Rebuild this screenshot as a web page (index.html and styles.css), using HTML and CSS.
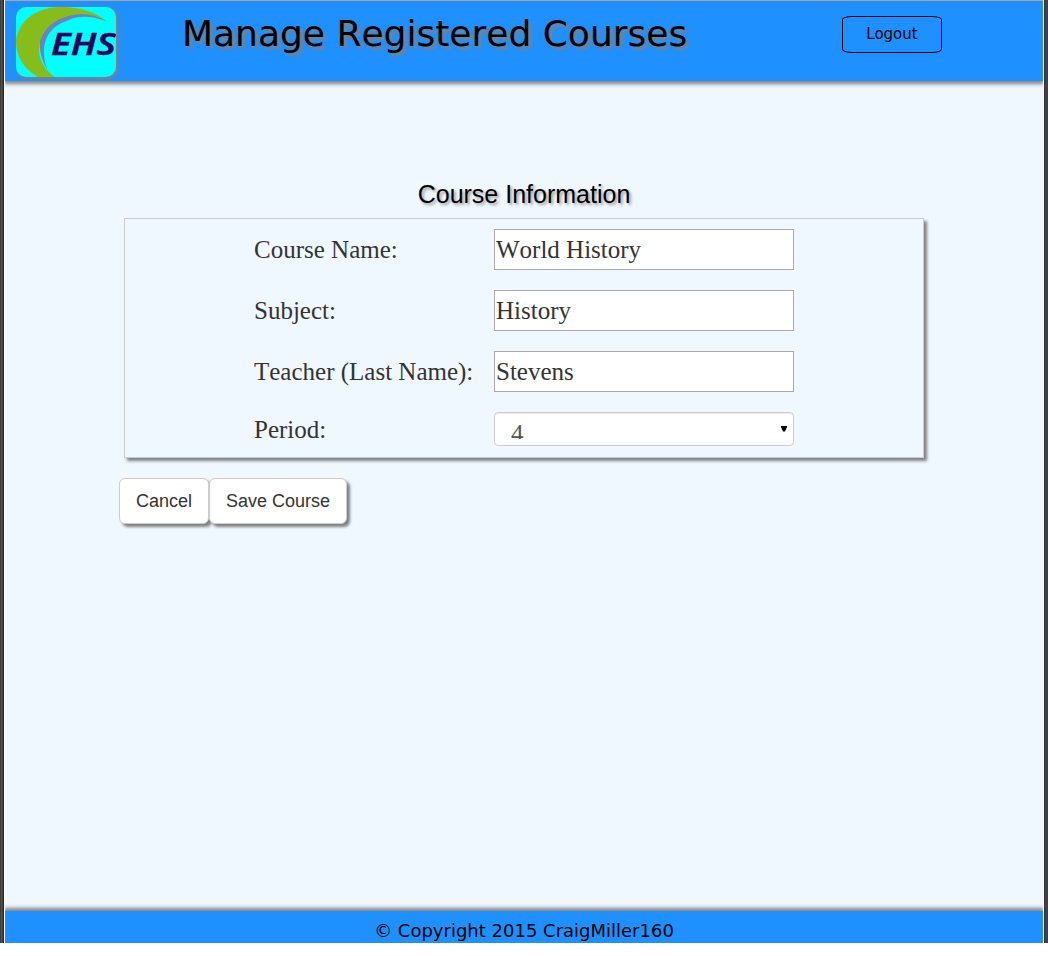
FILE: index.html
```html
<!DOCTYPE html>
<html lang="en">
<head>
<meta charset="utf-8">
<title>Manage Registered Courses</title>
<link rel="stylesheet" href="styles.css">
</head>
<body>
<div class="frame">
  <div class="page">
    <header class="header">
      <svg class="logo" viewBox="0 0 100 70" width="100" height="70" role="img" aria-label="EHS">
        <path fill="#6a83bd" d="M31 62C17 38 22 8 58 6C70 5 82 8 90 14C76 9 64 8 53 13C31 20 23 37 31 62Z"/>
        <path fill="#86bd1b" d="M0 34C3 12 22 0 45 0C64 0 80 5 90 14C78 7 64 5 53 9C32 14 23 29 23 43C23 54 30 64 39 70H22C8 62 0 50 0 34Z"/>
        <text class="logo-text" x="35" y="47.500" textLength="65" lengthAdjust="spacingAndGlyphs">EHS</text>
      </svg>
      <h1 class="title">Manage Registered Courses</h1>
      <button class="logout" type="button">Logout</button>
    </header>
    <main class="main">
      <h2 class="heading">Course Information</h2>
      <form>
        <div class="panel">
          <label class="label" for="name">Course Name:</label>
          <input class="input" id="name" value="World History">
          <label class="label" for="subject">Subject:</label>
          <input class="input" id="subject" value="History">
          <label class="label" for="teacher">Teacher (Last Name):</label>
          <input class="input" id="teacher" value="Stevens">
          <label class="label label-period" for="period">Period:</label>
          <div class="select" id="period">
            <span class="select-value">4</span>
            <svg class="arrow" width="6" height="6" viewBox="0 0 6 6"><path d="M0 0H6V1L4 5.500H2L0 1Z"/></svg>
          </div>
        </div>
        <div class="actions">
          <button class="button" type="button">Cancel</button>
          <button class="button button-save" type="button">Save Course</button>
        </div>
      </form>
    </main>
    <footer class="footer">© Copyright 2015 CraigMiller160</footer>
  </div>
</div>
</body>
</html>
```
FILE: styles.css
```css
* { box-sizing: border-box; }
body { margin: 0; background: #fff; overflow: hidden; }
.frame {
  height: 943px;
  padding: 0 4px;
  background: linear-gradient(90deg, #3c3b37 0 1px, #54524b 1px 2px, #45443e 2px 3px, #24231f 3px 4px, #353535 4px 1045px, #414141 1045px);
}
.page {
  display: flex;
  flex-direction: column;
  height: 943px;
  border: solid #fff;
  border-width: 0 1px;
  background: #f0f8ff;
  overflow: hidden;
}
.header {
  display: flex;
  align-items: flex-start;
  flex: none;
  height: 81px;
  border-top: 1px solid #a5a5a5;
  background: #1e90ff;
  box-shadow: 0 2px 4px 1px #808080;
}
.logo {
  flex: none;
  margin: 6px 0 0 11px;
  border-radius: 10px;
  background: #0ff;
  box-shadow: 1px 1px 3px 1px #808080;
}
.logo-text {
  font: italic 600 31px "Noto Sans", "Open Sans", sans-serif;
  fill: #32005c;
  stroke: #32005c;
  stroke-width: .4px;
}
.title {
  margin: 12px 0 0 66px;
  width: 660px;
  font: 36px/42px "DejaVu Sans", sans-serif;
  font-kerning: none;
  color: #000;
  text-shadow: 3px 3px 3px #808080;
}
.logout {
  width: 100px;
  height: 37px;
  margin-top: 15px;
  padding: 0 0 2px;
  border: 1px solid #000;
  border-radius: 10%;
  background: transparent;
  font: 15px "DejaVu Sans", sans-serif;
  color: #000;
}
.main { flex: 1; padding: 99px 119px 0; }
.heading {
  margin: 0 0 10px;
  font: 25px/28px "Liberation Sans", Arial, sans-serif;
  color: #000;
  text-align: center;
  text-shadow: 2px 2px 3px #999;
}
.panel {
  display: grid;
  grid-template-columns: 240px 300px;
  grid-template-rows: 41px 41px 41px 34px;
  row-gap: 20px;
  height: 240px;
  padding: 10px 0 0 129px;
  border: 1px solid #ccc;
  box-shadow: 3px 3px 3px #808080;
  color: #333;
}
.label, .input, .select {
  font: 25px "Liberation Serif", "Times New Roman", serif;
  font-kerning: none;
}
.label { align-self: center; }
.label-period { padding-top: 2px; }
.input {
  width: 300px;
  padding: 0 1px;
  border: 1px solid #a9a9a9;
  border-radius: 0;
  background: #fff;
  color: #333;
}
.select {
  display: flex;
  align-items: flex-start;
  justify-content: space-between;
  height: 34px;
  padding: 6px 6px 0 16px;
  border: 1px solid #ccc;
  border-radius: 4px;
  background: #fff;
  box-shadow: inset 0 1px 1px rgba(0, 0, 0, .075);
  color: #555;
}
.select-value { height: 20px; line-height: 30px; overflow: hidden; }
.arrow { margin-top: 7px; }
.actions { display: flex; margin: 20px 0 0 -5px; }
.button {
  width: 90px;
  height: 46px;
  padding: 0;
  border: 1px solid #ccc;
  border-radius: 6px;
  background: #fff;
  box-shadow: 3px 3px 3px #808080;
  font: 18px "Liberation Sans", Arial, sans-serif;
  color: #333;
}
.button-save { width: 138px; }
.footer {
  flex: none;
  height: 32px;
  background: #1e90ff;
  box-shadow: 0 -2px 4px 1px #808080;
  font: 18px/39px "DejaVu Sans", sans-serif;
  color: #000;
  text-align: center;
  overflow: hidden;
}
```
